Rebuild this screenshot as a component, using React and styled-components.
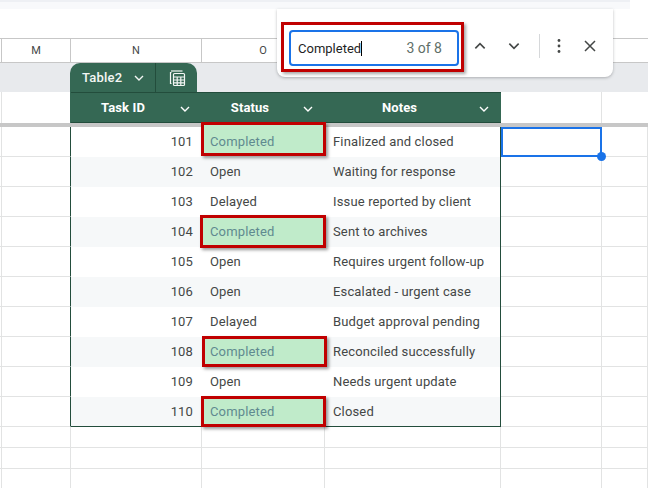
import React from 'react'
import styled, { createGlobalStyle } from 'styled-components'

const GlobalStyle = createGlobalStyle`
  html, body {
    margin: 0;
    padding: 0;
    background: #fff;
    overflow: hidden;
  }
  body {
    font-family: Roboto, "Liberation Sans", sans-serif;
  }
`

const columns = '2px 69px 131px 123px 176px 101px 46px'
const gridLine = '#e2e3e3'
const headerLine = '#c7c7c7'
const tableGreen = '#356854'
const tableEdge = '#234d3c'
const markRed = '#c00000'

const Page = styled.div`
  position: relative;
  width: 648px;
  height: 488px;
  overflow: hidden;
  display: flex;
  flex-direction: column;
  & > * {
    flex: none;
  }
`

const TopStrip = styled.div`
  width: 630px;
  height: 9px;
  box-sizing: border-box;
  border-top: 2px solid #eef0f4;
  background: #f8f9fb;
`

const Toolbar = styled.div`
  height: 30px;
  box-sizing: border-box;
  border-bottom: 1px solid ${headerLine};
`

const ColumnHeaders = styled.div`
  display: grid;
  grid-template-columns: ${columns};
  height: 24px;
  box-sizing: border-box;
  border-bottom: 1px solid ${headerLine};
`

const ColumnLabel = styled.div`
  display: flex;
  align-items: center;
  justify-content: center;
  border-right: 1px solid ${headerLine};
  box-sizing: border-box;
  font-size: 11px;
  color: #444746;
`

const Band = styled.div`
  height: 29px;
  background: #e8eaed;
  padding-left: 70px;
  display: flex;
  align-items: flex-end;
`

const TableTab = styled.div`
  display: flex;
  height: 29px;
  background: ${tableGreen};
  border-radius: 10px 10px 0 0;
  color: #f3f6f4;
`

const TabName = styled.div`
  width: 86px;
  box-sizing: border-box;
  padding-left: 12px;
  display: flex;
  align-items: center;
  gap: 11px;
  font-size: 13px;
  font-weight: 500;
  letter-spacing: 0.2px;
  border-right: 1px solid ${tableEdge};
`

const TabIcon = styled.div`
  width: 41px;
  display: flex;
  align-items: center;
  justify-content: center;
`

const HeaderRow = styled.div`
  display: grid;
  grid-template-columns: ${columns};
  height: 31px;
`

const Blank = styled.div`
  box-sizing: border-box;
  border-right: 1px solid ${props => (props.$edge ? tableGreen : gridLine)};
`

const HeaderCell = styled.div`
  position: relative;
  display: flex;
  align-items: center;
  justify-content: center;
  background: ${tableGreen};
  color: #fff;
  font-size: 13px;
  font-weight: 700;
  letter-spacing: 0.1px;
  padding-right: 27px;
  box-sizing: border-box;
  border-top: 1px solid ${tableEdge};
  border-bottom: 1px solid ${tableEdge};
  & > svg {
    position: absolute;
    right: 11px;
    top: 10px;
  }
`

const FreezeLine = styled.div`
  height: 4px;
  background: ${headerLine};
`

const Row = styled.div`
  display: grid;
  grid-template-columns: ${columns};
  height: 30px;
`

const BlankRow = styled(Row)`
  height: 21px;
`

const EmptyCell = styled.div`
  box-sizing: border-box;
  border-right: 1px solid ${props => (props.$edge ? tableEdge : gridLine)};
  border-bottom: 1px solid ${gridLine};
`

const Cell = styled.div`
  position: relative;
  display: flex;
  align-items: center;
  box-sizing: border-box;
  padding: 0 9px ${props => (props.$bottom ? 1 : 2)}px 8px;
  font-size: 13px;
  letter-spacing: 0.15px;
  color: #444746;
  background: ${props => (props.$striped ? '#f6f8f9' : '#fff')};
  justify-content: ${props => (props.$number ? 'flex-end' : 'flex-start')};
  border-right: ${props => (props.$last ? `1px solid ${tableEdge}` : 'none')};
  border-bottom: ${props => (props.$bottom ? `1px solid ${tableEdge}` : 'none')};
`

// hand drawn marks: each one sticks out of its row by a slightly different amount
const Highlight = styled.div`
  position: absolute;
  left: ${props => -props.$left}px;
  right: ${props => -props.$right}px;
  top: ${props => -props.$rise}px;
  height: ${props => props.$height}px;
  box-sizing: border-box;
  padding-left: ${props => 5 + props.$left}px;
  padding-top: ${props => Math.max(2 * props.$rise - props.$height + 28, 0)}px;
  padding-bottom: ${props => Math.max(props.$height - 2 * props.$rise - 28, 0)}px;
  display: flex;
  align-items: center;
  background: #c0ebca;
  border: 3px solid ${markRed};
  box-shadow: 2px 2px 3px rgba(0, 0, 0, 0.4);
  color: #5f8a90;
  z-index: 1;
`

const SelectedCell = styled.div`
  position: relative;
  box-sizing: border-box;
  border: 2px solid #1a73e8;
  z-index: 1;
  &::after {
    content: '';
    position: absolute;
    right: -6px;
    bottom: -6px;
    width: 9px;
    height: 9px;
    border-radius: 50%;
    background: #1a73e8;
  }
`

const FindBar = styled.div`
  position: absolute;
  left: 277px;
  top: 9px;
  width: 336px;
  height: 68px;
  box-sizing: border-box;
  background: #fff;
  border-radius: 0 0 8px 8px;
  box-shadow: 0 1px 3px rgba(60, 64, 67, 0.35);
  padding: 21px 0 0 12px;
  display: flex;
  z-index: 3;
`

const FindAnnotation = styled.div`
  position: absolute;
  left: 4px;
  top: 13px;
  width: 183px;
  height: 50px;
  box-sizing: border-box;
  border: 3px solid ${markRed};
  box-shadow: 2px 2px 3px rgba(0, 0, 0, 0.35);
`

const FindInput = styled.div`
  position: relative;
  width: 170px;
  height: 36px;
  box-sizing: border-box;
  border: 2px solid #1a73e8;
  border-radius: 4px;
  display: flex;
  align-items: center;
  padding: 0 15px 0 7px;
  font-size: 13px;
  color: #1f1f1f;
`

const Caret = styled.span`
  width: 1px;
  height: 15px;
  background: #000;
`

const FindCount = styled.span`
  margin-left: auto;
  font-size: 14px;
  color: #5f6f68;
`

const FindButtons = styled.div`
  display: flex;
  align-items: center;
  height: 32px;
  margin-left: 4px;
  color: #444746;
`

const IconButton = styled.div`
  width: ${props => props.$width}px;
  display: flex;
  justify-content: center;
`

const Divider = styled.div`
  width: 1px;
  height: 24px;
  background: #d6d8da;
  margin: 0 9px 0 8px;
`

function Chevron({ color = '#fff', up, size = 12 }) {
  return (
    <svg width={size} height={size} viewBox="0 0 12 12" fill="none" stroke={color} strokeWidth="1.4">
      <path d={up ? 'M2 8l4-4 4 4' : 'M2 4l4 4 4-4'} />
    </svg>
  )
}

function TableIcon() {
  return (
    <svg width="18" height="18" viewBox="0 0 18 18" fill="none" stroke="#f3f6f4" strokeWidth="1.2">
      <path d="M3.5 14.5h-1v-11h1" />
      <path d="M3 2h11.5" />
      <rect x="5.5" y="4.5" width="11" height="12" rx="1" />
      <path d="M5.5 8h11M5.5 11h11M5.5 13.8h11M9.2 8v8.5M12.8 8v8.5" />
    </svg>
  )
}

const tasks = [
  { id: 101, status: 'Completed', notes: 'Finalized and closed', mark: { left: 1, right: 1, rise: 5, height: 34 } },
  { id: 102, status: 'Open', notes: 'Waiting for response' },
  { id: 103, status: 'Delayed', notes: 'Issue reported by client' },
  { id: 104, status: 'Completed', notes: 'Sent to archives', mark: { left: 2, right: 1, rise: 2, height: 33 } },
  { id: 105, status: 'Open', notes: 'Requires urgent follow-up' },
  { id: 106, status: 'Open', notes: 'Escalated - urgent case' },
  { id: 107, status: 'Delayed', notes: 'Budget approval pending' },
  { id: 108, status: 'Completed', notes: 'Reconciled successfully', mark: { left: 0, right: 2, rise: 1, height: 31 } },
  { id: 109, status: 'Open', notes: 'Needs urgent update' },
  { id: 110, status: 'Completed', notes: 'Closed', mark: { left: 1, right: 1, rise: 1, height: 31 } },
]

export default function App() {
  return (
    <Page>
      <GlobalStyle />
      <TopStrip />
      <Toolbar />
      <ColumnHeaders>
        <ColumnLabel />
        <ColumnLabel>M</ColumnLabel>
        <ColumnLabel>N</ColumnLabel>
        <ColumnLabel>O</ColumnLabel>
        <ColumnLabel />
        <ColumnLabel />
      </ColumnHeaders>
      <Band>
        <TableTab>
          <TabName>
            Table2
            <Chevron color="#f3f6f4" />
          </TabName>
          <TabIcon>
            <TableIcon />
          </TabIcon>
        </TableTab>
      </Band>
      <HeaderRow>
        <Blank />
        <Blank $edge />
        <HeaderCell>Task ID<Chevron /></HeaderCell>
        <HeaderCell>Status<Chevron /></HeaderCell>
        <HeaderCell>Notes<Chevron /></HeaderCell>
        <Blank />
      </HeaderRow>
      <FreezeLine />
      {tasks.map(({ id, status, notes, mark }, i) => {
        const striped = i % 2 === 1
        const bottom = i === tasks.length - 1
        return (
          <Row key={id}>
            <EmptyCell />
            <EmptyCell $edge />
            <Cell $number $striped={striped} $bottom={bottom}>{id}</Cell>
            <Cell $striped={striped} $bottom={bottom}>
              {mark
                ? (
                  <Highlight $left={mark.left} $right={mark.right} $rise={mark.rise} $height={mark.height}>
                    {status}
                  </Highlight>
                )
                : status}
            </Cell>
            <Cell $last $striped={striped} $bottom={bottom}>{notes}</Cell>
            {i === 0 ? <SelectedCell /> : <EmptyCell />}
            <EmptyCell />
          </Row>
        )
      })}
      {[0, 1, 2].map(n => (
        <BlankRow key={n}>
          <EmptyCell />
          <EmptyCell />
          <EmptyCell />
          <EmptyCell />
          <EmptyCell />
          <EmptyCell />
          <EmptyCell />
        </BlankRow>
      ))}
      <FindBar>
        <FindAnnotation />
        <FindInput>
          Completed<Caret />
          <FindCount>3 of 8</FindCount>
        </FindInput>
        <FindButtons>
          <IconButton $width={34}><Chevron color="#444746" up size={14} /></IconButton>
          <IconButton $width={34}><Chevron color="#444746" size={14} /></IconButton>
          <Divider />
          <IconButton $width={20}>
            <svg width="16" height="16" viewBox="0 0 16 16" fill="#444746">
              <circle cx="8" cy="2.5" r="1.4" />
              <circle cx="8" cy="8" r="1.4" />
              <circle cx="8" cy="13.5" r="1.4" />
            </svg>
          </IconButton>
          <IconButton $width={42}>
            <svg width="14" height="14" viewBox="0 0 14 14" fill="none" stroke="#444746" strokeWidth="1.5">
              <path d="M2 2l10 10M12 2L2 12" />
            </svg>
          </IconButton>
        </FindButtons>
      </FindBar>
    </Page>
  )
}
